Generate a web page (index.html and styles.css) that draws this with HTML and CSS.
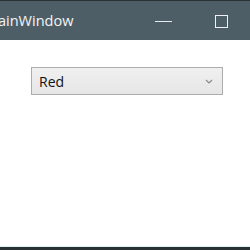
FILE: index.html
```html
<!DOCTYPE html>
<html>
<head>
<meta charset="utf-8">
<link rel="stylesheet" href="styles.css">
</head>
<body>
<div class="window">
  <div class="titlebar">
    <span class="title">ainWindow</span>
    <div class="controls">
      <span class="min"></span>
      <span class="max"></span>
    </div>
  </div>
  <div class="content">
    <div class="combo">
      <span class="value">Red</span>
      <svg class="chev" width="8" height="5" viewBox="0 0 8 5"><path d="M1 1 L4 4 L7 1" fill="none" stroke="#8a8a8a" stroke-width="1.2"/></svg>
    </div>
  </div>
  <div class="bottom"></div>
</div>
</body>
</html>
```
FILE: styles.css
```css
html, body { margin: 0; padding: 0; }
body { width: 250px; height: 250px; overflow: hidden; background: #fff; font-family: "Open Sans", "Noto Sans", sans-serif; }
.window { display: flex; flex-direction: column; height: 250px; }
.titlebar {
  height: 40px; box-sizing: border-box;
  background: #4e5e67; border-top: 1px solid #2b3236;
  display: flex; align-items: center; justify-content: space-between;
}
.title { color: #f2f4f5; font-size: 14.5px; margin-left: -2px; }
.controls { display: flex; align-items: center; margin-right: 22px; gap: 43px; }
.min { width: 17px; height: 1px; background: #e8ecee; margin-top: 1px; }
.max { width: 11px; height: 11px; border: 1px solid #eef1f2; margin-top: 1px; }
.content { flex: 1; padding: 27px 27px 0 31px; }
.combo {
  height: 28px; box-sizing: border-box;
  border: 1px solid #acacac;
  background: linear-gradient(#f0f0f0, #e6e6e6);
  display: flex; align-items: center; justify-content: space-between;
  padding: 0 9px 0 7px;
}
.value { font-size: 14px; color: #111; font-family: "Open Sans", sans-serif; }
.chev { display: block; margin-top: 1px; }
.bottom { height: 3px; border-top: 1px solid #dfeeee; background: #2a3134; }
```
